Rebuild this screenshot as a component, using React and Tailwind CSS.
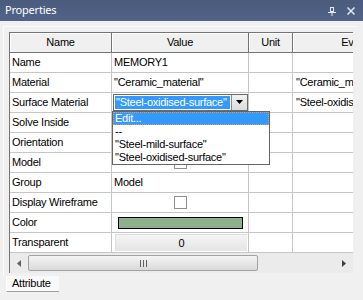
import React from 'react';

const rows = [
  { name: 'Name', value: 'MEMORY1' },
  { name: 'Material', value: '"Ceramic_material"', ev: '"Ceramic_material"' },
  { name: 'Surface Material', combo: true, ev: '"Steel-oxidised-surface"' },
  { name: 'Solve Inside' },
  { name: 'Orientation' },
  { name: 'Model', check: true },
  { name: 'Group', value: 'Model' },
  { name: 'Display Wireframe', check: true },
  { name: 'Color', color: true },
  { name: 'Transparent', button: '0' },
];

const options = ['Edit...', '--', '"Steel-mild-surface"', '"Steel-oxidised-surface"'];

const Combo = () => (
  <>
    <div className="ml-[1px] mt-[-1px] flex h-[17px] w-[135px] border border-[#6b6b6b] bg-white">
      <div className="m-[1px] flex w-[116px] items-center bg-[#3399ff] pl-[1px] text-white whitespace-nowrap overflow-hidden">
        "Steel-oxidised-surface"
      </div>
      <div className="ml-auto flex w-[16px] items-center justify-center border-l border-[#8a8a8a] bg-gradient-to-b from-[#f2f2f2] to-[#dcdcdc]">
        <svg width="7" height="4" viewBox="0 0 7 4"><polygon points="0,0 7,0 3.5,4" fill="#000" /></svg>
      </div>
    </div>
    {/* open drop-down list */}
    <div className="absolute left-0 top-[18px] z-10 w-[158px] border border-[#646464] bg-white">
      {options.map((o, i) => (
        <div
          key={o}
          className={
            i === 0
              ? 'flex h-[13px] items-center bg-[#3399ff] pl-[2px] text-white outline-1 outline-dotted outline-[#e0a040] -outline-offset-1'
              : 'flex h-[13px] items-center pl-[2px] whitespace-nowrap'
          }
        >
          {o}
        </div>
      ))}
    </div>
  </>
);

const Value = ({ row }) => {
  if (row.combo) return <Combo />;
  if (row.check)
    return <div className="mx-auto h-[13px] w-[13px] border border-[#8e8f8f] bg-white" />;
  if (row.color)
    return <div className="ml-[6px] h-[12px] w-[125px] border border-black bg-[#8fb08c]" />;
  if (row.button)
    return (
      <div className="ml-[3px] flex h-[17px] w-[132px] items-center justify-center border-t border-l border-[#dedede] border-r-[#6a6a6a] border-b-[#6a6a6a] bg-gradient-to-b from-[#f4f4f4] to-[#e4e4e4]">
        {row.button}
      </div>
    );
  return <span className="pl-[2px] whitespace-nowrap">{row.value}</span>;
};

export default function App() {
  return (
    <div className="h-[300px] w-[363px] overflow-hidden bg-[#f0f0f0] font-['Liberation_Sans',Arial,sans-serif] text-[11px] tracking-[-0.25px] text-black">
      {/* Title bar */}
      <div className="flex h-[21px] items-center justify-between bg-gradient-to-b from-[#4a5b7c] to-[#51638a] pl-[5px] pr-[8px]">
        <span className="font-['Noto_Sans',sans-serif] text-[11px] tracking-[-0.2px] text-white">Properties</span>
        <div className="flex items-center gap-[11px] pt-[1px]">
          <svg width="8" height="9" viewBox="0 0 8 9" fill="none" stroke="#e6ebf2" strokeWidth="1">
            <rect x="2.5" y="0.5" width="3" height="4" />
            <line x1="0" y1="5.5" x2="8" y2="5.5" />
            <line x1="4" y1="6" x2="4" y2="9" />
          </svg>
          <svg width="8" height="8" viewBox="0 0 8 8" stroke="#e6ebf2" strokeWidth="1.4">
            <line x1="0.5" y1="0.5" x2="7.5" y2="7.5" />
            <line x1="7.5" y1="0.5" x2="0.5" y2="7.5" />
          </svg>
        </div>
      </div>

      {/* Panel */}
      <div className="ml-[3px] mt-[5px] h-[251px] w-[355px] border-l border-t border-[#fbfbfb] border-r-[#a0a0a0] border-b-[#8c8c8c] pl-[5px] pt-[5px]">
        <div className="w-[344px] overflow-hidden border-l border-t border-[#747474] bg-white">
          {/* header */}
          <div className="flex h-[20px] w-[430px]">
            {[
              ['Name', 'w-[102px]'],
              ['Value', 'w-[137px]'],
              ['Unit', 'w-[44px]'],
              ['Evaluated', 'w-[144px]'],
            ].map(([t, w]) => (
              <div
                key={t}
                className={`${w} flex shrink-0 items-center justify-center border-r border-b border-[#747474] bg-[#f0f0f0] shadow-[inset_1px_1px_0_#ffffff]`}
              >
                {t}
              </div>
            ))}
          </div>
          {/* rows */}
          {rows.map((r) => (
            <div key={r.name} className="flex h-[20px] w-[430px] border-b border-[#c6c6c6]">
              <div className="flex w-[102px] shrink-0 items-center border-r border-[#c6c6c6] pl-[2px] whitespace-nowrap">
                {r.name}
              </div>
              <div className="relative flex w-[137px] shrink-0 items-center border-r border-[#c6c6c6]">
                <Value row={r} />
              </div>
              <div className="w-[44px] shrink-0 border-r border-[#c6c6c6]" />
              <div className="flex w-[144px] shrink-0 items-center overflow-hidden pl-[3px] whitespace-nowrap">
                {r.ev}
              </div>
            </div>
          ))}
          {/* horizontal scrollbar */}
          <div className="flex h-[20px] items-center bg-[#ebebeb]">
            <div className="flex w-[17px] justify-center">
              <svg width="4" height="7" viewBox="0 0 4 7"><polygon points="4,0 4,7 0,3.5" fill="#606060" /></svg>
            </div>
            <div className="ml-[1px] flex h-[16px] w-[230px] items-center justify-center rounded-[2px] border border-[#a3a3a3] bg-gradient-to-b from-[#f5f5f5] to-[#d9d9d9]">
              <svg width="7" height="7" viewBox="0 0 7 7" stroke="#606060" strokeWidth="1">
                <line x1="0.5" y1="0" x2="0.5" y2="7" />
                <line x1="3.5" y1="0" x2="3.5" y2="7" />
                <line x1="6.5" y1="0" x2="6.5" y2="7" />
              </svg>
            </div>
            <div className="ml-auto mr-[7px] flex">
              <svg width="4" height="7" viewBox="0 0 4 7"><polygon points="0,0 0,7 4,3.5" fill="#404040" /></svg>
            </div>
          </div>
        </div>
      </div>

      {/* Tabs */}
      <div className="ml-[6px] mt-[-1px] flex h-[16px] w-[53px] items-center border-l border-[#ffffff] border-r-[#7a7a7a] border-b border-b-[#a0a0a0] bg-[#f9f9f9] pl-[5px]">
        Attribute
      </div>
    </div>
  );
}
